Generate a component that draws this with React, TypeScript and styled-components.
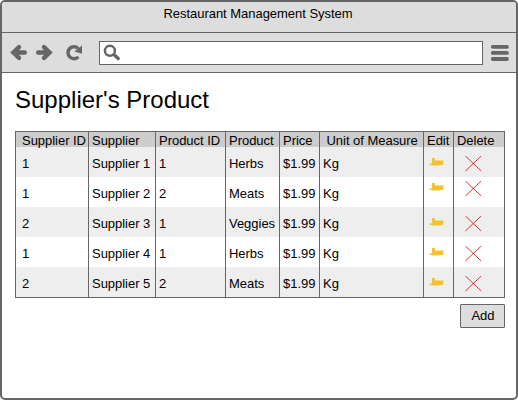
import React from "react";
import styled, { createGlobalStyle } from "styled-components";

const GlobalStyle = createGlobalStyle`
  * { box-sizing: border-box; }
  html, body { margin: 0; background: #fff; }
  body { font-family: "Liberation Sans", Arial, sans-serif; color: #000; }
`;

const BrowserFrame = styled.div`
  width: 518px;
  height: 400px;
  border: 2px solid #666;
  border-radius: 5px;
  background: #fff;
  overflow: hidden;
`;

const TitleBar = styled.header`
  height: 31px;
  padding: 4px 2px 0 0;
  background: #ddd;
  border-bottom: 1px solid #666;
  font-size: 13px;
  line-height: 16px;
  letter-spacing: -0.03px;
  text-align: center;
`;

const Toolbar = styled.nav`
  display: flex;
  height: 40px;
  padding: 8px 7px 0 8px;
  background: #ddd;
  border-bottom: 1px solid #666;
`;

const NavIcons = styled.svg`
  flex: none;
  width: 89px;
  height: 24px;
`;

const AddressBar = styled.div`
  width: 384px;
  height: 24px;
  padding: 2px 3px;
  background: #fff;
  border: 1px solid #666;
`;

const SearchIcon = styled.svg`
  display: block;
  width: 20px;
  height: 18px;
`;

const MenuIcon = styled.svg`
  width: 18px;
  height: 24px;
  margin-left: 8px;
`;

const Content = styled.main`
  padding: 11px 11px 0 13px;
`;

const Heading = styled.h1`
  margin: 0 0 17px;
  height: 30px;
  font-size: 24px;
  line-height: 32px;
  font-weight: 400;
  white-space: nowrap;
`;

const Table = styled.div`
  width: 490px;
  border: 1px solid #666;
  border-left: 0;
`;

const Row = styled.div<{ $tone: string; $height: number }>`
  display: grid;
  grid-template-columns: 73px 67px 70px 54px 40px 104px 30px 51px;
  height: ${(p) => p.$height}px;
  background: ${(p) => p.$tone};
`;

const Cell = styled.div<{ $inset?: number; $top: number }>`
  border-left: 1px solid #666;
  padding: ${(p) => p.$top}px 0 0 ${(p) => p.$inset ?? 3}px;
  font-size: 13px;
  line-height: 15px;
  letter-spacing: -0.03px;
  white-space: nowrap;
`;

const CellIcon = styled.svg`
  display: block;
  width: 17px;
  height: 16px;
`;

const Footer = styled.div`
  display: flex;
  justify-content: flex-end;
  width: 490px;
  margin-top: 6px;
`;

const AddButton = styled.button`
  width: 45px;
  height: 24px;
  padding: 0 0 0 1px;
  border: 1px solid #666;
  border-radius: 1px;
  background: #ddd;
  color: #000;
  font: 13px/22px "Liberation Sans", Arial, sans-serif;
`;

const columns = [
  { label: "Supplier ID", inset: 6 },
  { label: "Supplier" },
  { label: "Product ID" },
  { label: "Product" },
  { label: "Price" },
  { label: "Unit of Measure", inset: 6.5 },
  { label: "Edit" },
  { label: "Delete" },
];

const products = [
  { supplierId: "1", supplier: "Supplier 1", productId: "1", product: "Herbs", iconTop: 8 },
  { supplierId: "1", supplier: "Supplier 2", productId: "2", product: "Meats", iconTop: 3 },
  { supplierId: "2", supplier: "Supplier 3", productId: "1", product: "Veggies", iconTop: 8 },
  { supplierId: "1", supplier: "Supplier 4", productId: "1", product: "Herbs", iconTop: 8 },
  { supplierId: "2", supplier: "Supplier 5", productId: "2", product: "Meats", iconTop: 8 },
];

const Pencil = () => (
  <CellIcon viewBox="0 0 17 16">
    <path d="M3 3h3v2.4h8.4v4.3l-2.4.2-2 .6H4.6L.4 9.8v-1L3 8.2z" fill="#f1c232" />
  </CellIcon>
);

const Cross = () => (
  <CellIcon viewBox="0 0 17 16">
    <path d="M.4 0l15.8 15M16.2 0L.4 15" stroke="#cc2222" strokeWidth="0.9" fill="none" />
  </CellIcon>
);

export default function App() {
  return (
    <>
      <GlobalStyle />
      <BrowserFrame>
        <TitleBar>Restaurant Management System</TitleBar>
        <Toolbar>
          <NavIcons viewBox="10 41 89 24" fill="none" stroke="#666" strokeLinecap="round">
            <path d="M13.4 52.5h11.4M19 47.1l-5.6 5.4 5.6 5.4" strokeWidth="4.4" />
            <path d="M38.2 52.5h11.4M44 47.1l5.6 5.4-5.6 5.4" strokeWidth="4.4" />
            <path d="M78.2 48.4a6 6 0 1 0 .2 8.4" strokeWidth="3.4" strokeLinecap="butt" />
            <path d="M82 45.6v8.2l-7.6-2.4z" fill="#666" stroke="none" />
          </NavIcons>
          <AddressBar>
            <SearchIcon viewBox="103 44 20 18" fill="none" stroke="#666">
              <circle cx="109.9" cy="50.8" r="5" strokeWidth="2.4" />
              <path d="M114.2 54.8l4 3.7" strokeWidth="3.4" strokeLinecap="round" />
            </SearchIcon>
          </AddressBar>
          <MenuIcon viewBox="491 41 18 24" stroke="#666" strokeWidth="3.8" strokeLinecap="round">
            <path d="M492.8 46.8h14.2M492.8 52.9h14.2M492.8 59h14.2" />
          </MenuIcon>
        </Toolbar>
        <Content>
          <Heading>Supplier's Product</Heading>
          <Table>
            <Row $tone="#ccc" $height={15}>
              {columns.map((c) => (
                <Cell key={c.label} $inset={c.inset} $top={1}>
                  {c.label}
                </Cell>
              ))}
            </Row>
            {products.map((p, i) => (
              <Row key={p.supplier} $tone={i % 2 ? "#fff" : "#eee"} $height={30}>
                <Cell $inset={6} $top={9}>{p.supplierId}</Cell>
                <Cell $top={9}>{p.supplier}</Cell>
                <Cell $top={9}>{p.productId}</Cell>
                <Cell $top={9}>{p.product}</Cell>
                <Cell $top={9}>$1.99</Cell>
                <Cell $top={9}>Kg</Cell>
                <Cell $inset={5} $top={p.iconTop}><Pencil /></Cell>
                <Cell $inset={11} $top={p.iconTop + 1}><Cross /></Cell>
              </Row>
            ))}
          </Table>
          <Footer>
            <AddButton>Add</AddButton>
          </Footer>
        </Content>
      </BrowserFrame>
    </>
  );
}
